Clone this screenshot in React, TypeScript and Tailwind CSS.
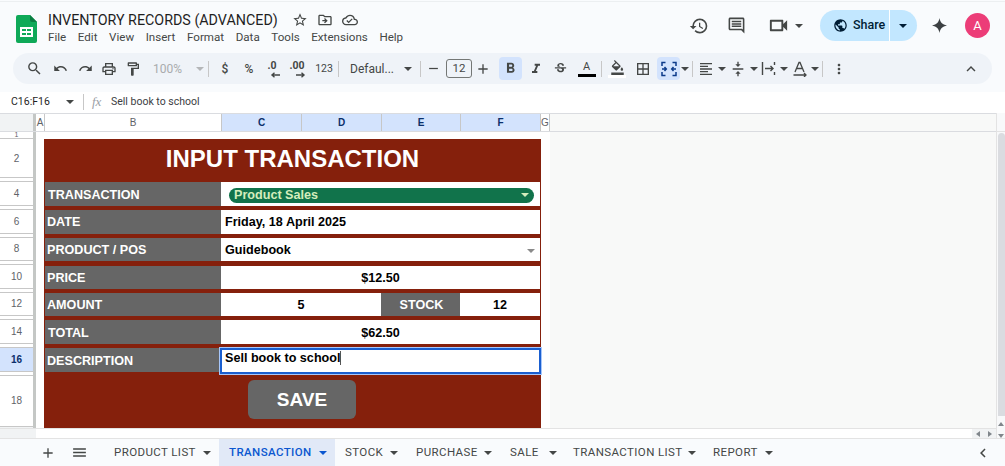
import React from "react";
import {
  MdSearch, MdUndo, MdRedo, MdOutlinePrint, MdOutlineFormatPaint, MdFormatBold, MdFormatItalic,
  MdStrikethroughS, MdOutlineFormatColorFill, MdBorderAll, MdFormatAlignLeft, MdVerticalAlignCenter,
  MdMoreVert, MdKeyboardArrowUp, MdHistory, MdOutlineComment, MdOutlineVideocam, MdPublic, MdAdd,
  MdMenu, MdChevronLeft, MdStarBorder, MdOutlineDriveFileMove, MdOutlineCloudDone, MdRemove,
} from "react-icons/md";

const ui = { fontFamily: "Roboto, 'Noto Sans', sans-serif" };
const sheet = { fontFamily: "'Liberation Sans', Arial, sans-serif" };

function Caret({ className = "border-t-[#444746]" }: { className?: string }) {
  return <span className={`inline-block h-0 w-0 border-x-[4px] border-t-[4px] border-x-transparent ${className}`} />;
}

function Sep({ className = "" }: { className?: string }) {
  return <span className={`h-[16px] w-px shrink-0 bg-[#c7c7c7] ${className}`} />;
}

function Slot({ className, children }: { className: string; children: React.ReactNode }) {
  return <span className={`flex h-[23px] shrink-0 items-center justify-center text-[#444746] ${className}`}>{children}</span>;
}

function SheetsLogo() {
  return (
    <svg width="21" height="28" viewBox="0 0 21 28" className="shrink-0">
      <path d="M2 0h12l7 7v19a2 2 0 0 1-2 2H2a2 2 0 0 1-2-2V2a2 2 0 0 1 2-2z" fill="#0fa958" />
      <path d="M14 0l7 7h-5a2 2 0 0 1-2-2z" fill="#0a7d41" />
      <path d="M4 12h13v10H4z" fill="#fff" />
      <path d="M6 14h4v2H6zM11 14h4v2h-4zM6 18h4v2H6zM11 18h4v2h-4z" fill="#0fa958" />
    </svg>
  );
}

function MergeIcon() {
  return (
    <svg width="16" height="16" viewBox="0 0 16 16" fill="none" stroke="#0b3a8a" strokeWidth="1.5">
      <path d="M1 5V1.500h3.500M11.500 1.500H15V5M1 11v3.500h3.500M11.500 14.500H15V11" />
      <path d="M1 8h3.500M3.500 6l1.800 2-1.800 2M15 8h-3.500M12.500 6l-1.800 2 1.800 2" />
    </svg>
  );
}

function WrapIcon() {
  return (
    <svg width="15" height="15" viewBox="0 0 15 15" fill="none" stroke="#444746" strokeWidth="1.4">
      <path d="M1.500 1v13M13.500 1v3M13.500 11v3M4 7.500h8M9.500 5l2.500 2.500L9.500 10" />
    </svg>
  );
}

function RotateIcon() {
  return (
    <svg width="16" height="16" viewBox="0 0 16 16" fill="none" stroke="#444746" strokeWidth="1.3">
      <path d="M3 11 7 1.500h1L12 11M4.600 7.500h5.800M1.500 14h12M12 12l2 2-2 2" />
    </svg>
  );
}

function DecreaseDecimal() {
  return (
    <span className="relative flex h-[18px] w-[18px] flex-col items-center text-[10.5px] font-bold leading-[11px] text-[#444746]">
      <span>.0</span>
      <svg width="12" height="6" viewBox="0 0 12 6" className="absolute right-[0px] bottom-[0px]" fill="none" stroke="#444746" strokeWidth="1.4">
        <path d="M11 3H3M5.500 .8 3 3l2.500 2.200" />
      </svg>
    </span>
  );
}

function IncreaseDecimal() {
  return (
    <span className="relative flex h-[18px] w-[22px] flex-col items-center text-[10.5px] font-bold leading-[11px] text-[#444746]">
      <span>.00</span>
      <svg width="12" height="6" viewBox="0 0 12 6" className="absolute right-[1px] bottom-[0px]" fill="none" stroke="#444746" strokeWidth="1.4">
        <path d="M1 3h8M6.500 .8 9 3 6.500 5.200" />
      </svg>
    </span>
  );
}

function Header() {
  const menus = ["File", "Edit", "View", "Insert", "Format", "Data", "Tools", "Extensions", "Help"];
  return (
    <div className="h-[92px] shrink-0 bg-[#f9fbfd] pt-[1px]" style={ui}>
      <div className="h-[1px] bg-[#eceff1]" />
      <div className="flex h-[51px] items-start">
        <div className="ml-[16px] mt-[13px]"><SheetsLogo /></div>
        <div className="ml-[11px] mt-[7px] flex flex-col">
          <div className="flex h-[21px] items-center">
            <span className="whitespace-nowrap text-[14.3px] leading-[20px] text-[#1f1f1f]">INVENTORY RECORDS (ADVANCED)</span>
            <span className="ml-[14px] flex items-center gap-[9px] text-[#444746]">
              <MdStarBorder size={16} />
              <MdOutlineDriveFileMove size={16} />
              <MdOutlineCloudDone size={16} />
            </span>
          </div>
          <div className="mt-[-1px] flex gap-[11.6px] text-[11.6px] leading-[17px] text-[#444746]">
            {menus.map((m) => <span key={m}>{m}</span>)}
          </div>
        </div>
        <div className="ml-auto mt-[8px] flex items-center pr-[15px] text-[#444746]">
          <MdHistory size={20} />
          <MdOutlineComment size={19} className="ml-[18px]" />
          <MdOutlineVideocam size={23} className="ml-[21px]" />
          <span className="ml-[5px] flex"><Caret /></span>
          <div className="ml-[17px] mr-[1px] flex h-[31px] w-[97px] items-center rounded-full bg-[#c2e7ff] text-[#001d35]">
            <div className="flex h-full w-[70px] items-center border-r border-white pl-[13px]">
              <MdPublic size={15} />
              <span className="ml-[5px] text-[12.5px] font-medium">Share</span>
            </div>
            <span className="ml-[9px] flex"><Caret className="border-t-[#001d35]" /></span>
          </div>
          <svg width="15" height="15" viewBox="0 0 16 16" className="ml-[14px]">
            <path d="M8 0c.7 4.600 2.900 7 8 8-5.100 1-7.300 3.400-8 8-.7-4.600-2.900-7-8-8 5.100-1 7.300-3.400 8-8z" fill="#3c4043" />
          </svg>
          <span className="ml-[18px] flex h-[25px] w-[25px] items-center justify-center rounded-full bg-[#ec3d78] text-[13px] text-white">A</span>
        </div>
      </div>
      <div className="mx-[13px] flex h-[31px] items-center rounded-full bg-[#eff3f8] pl-[9px]">
        <Slot className="w-[24px]"><MdSearch size={17} /></Slot>
        <Slot className="w-[28px] pl-[1px]"><MdUndo size={15} /></Slot>
        <Slot className="w-[22px]"><MdRedo size={15} /></Slot>
        <Slot className="w-[25px]"><MdOutlinePrint size={16} /></Slot>
        <Slot className="w-[24px]"><MdOutlineFormatPaint size={16} /></Slot>
        <Slot className="w-[63px] justify-start pl-[8px]">
          <span className="text-[12px] text-[#a9abad]">100%</span>
          <span className="ml-[14px] flex"><Caret className="border-t-[#b4b6b8]" /></span>
        </Slot>
        <Sep />
        <Slot className="ml-[4px] w-[24px] text-[12px] font-medium">$</Slot>
        <Slot className="w-[24px] text-[12px] font-medium">%</Slot>
        <Slot className="ml-[-1px] w-[24px]"><DecreaseDecimal /></Slot>
        <Slot className="ml-[1px] w-[24px]"><IncreaseDecimal /></Slot>
        <Slot className="ml-[3px] w-[24px] text-[10.5px]">123</Slot>
        <Sep className="ml-[2px]" />
        <Slot className="w-[77px] justify-start pl-[11px]">
          <span className="text-[12px]">Defaul...</span>
          <span className="ml-[10px] flex"><Caret /></span>
        </Slot>
        <Sep className="ml-[4px]" />
        <Slot className="w-[25px]"><MdRemove size={15} /></Slot>
        <span className="flex h-[19px] w-[26px] shrink-0 items-center justify-center rounded-[3px] border border-[#747775] text-[11.5px] text-[#444746]">12</span>
        <Slot className="ml-[-1px] w-[24px]"><MdAdd size={16} /></Slot>
        <Slot className="ml-[4px] w-[23px] rounded-[4px] bg-[#d3e3fd] text-[#0b2f6b]"><MdFormatBold size={17} /></Slot>
        <Slot className="ml-[1px] w-[25px]"><MdFormatItalic size={16} /></Slot>
        <Slot className="w-[24px]"><MdStrikethroughS size={15} /></Slot>
        <Slot className="ml-[1px] w-[27px] flex-col">
          <span className="text-[11px] leading-[12px]">A</span>
          <span className="mt-[1px] h-[3px] w-[18px] bg-black" />
        </Slot>
        <Sep className="ml-[1px]" />
        <Slot className="ml-[3px] w-[24px] flex-col">
          <MdOutlineFormatColorFill size={15} />
          <span className="h-[3px] w-[18px] bg-white" />
        </Slot>
        <Slot className="ml-[1px] w-[26px]"><MdBorderAll size={16} /></Slot>
        <Slot className="ml-[1px] w-[23px] rounded-[4px] bg-[#d3e3fd]"><MergeIcon /></Slot>
        <Slot className="w-[10px]"><Caret /></Slot>
        <Sep className="ml-[2px]" />
        <Slot className="ml-[4px] w-[17px]"><MdFormatAlignLeft size={16} /></Slot>
        <Slot className="ml-[2px] w-[12px]"><Caret /></Slot>
        <Slot className="ml-[1px] w-[17px]"><MdVerticalAlignCenter size={16} /></Slot>
        <Slot className="ml-[2px] w-[12px]"><Caret /></Slot>
        <Slot className="ml-[-1px] w-[18px]"><WrapIcon /></Slot>
        <Slot className="ml-[1px] w-[12px]"><Caret /></Slot>
        <Slot className="ml-[1px] w-[18px]"><RotateIcon /></Slot>
        <Slot className="w-[12px]"><Caret /></Slot>
        <Sep className="ml-[1px]" />
        <Slot className="ml-[4px] w-[24px]"><MdMoreVert size={16} /></Slot>
        <Slot className="ml-auto mr-[9px] w-[24px]"><MdKeyboardArrowUp size={18} /></Slot>
      </div>
    </div>
  );
}

function FormulaBar() {
  return (
    <div className="flex h-[21px] shrink-0 items-center bg-white pb-[2px] text-[10.5px] text-[#1f1f1f]" style={ui}>
      <span className="ml-[11px] w-[55px]">C16:F16</span>
      <span className="flex"><Caret /></span>
      <Sep className="ml-[9px] h-[14px]" />
      <span className="ml-[8px] w-[19px] text-[13px] italic text-[#9aa0a6]" style={{ fontFamily: "'Liberation Serif', serif" }}>fx</span>
      <span className="text-[10.5px] text-[#3c4043]">Sell book to school</span>
    </div>
  );
}

function ColHead({ label, className }: { label: string; className: string }) {
  return (
    <div className={`flex h-full shrink-0 items-center justify-center border-r border-[#c7c7c7] text-[10px] ${className}`}>
      {label}
    </div>
  );
}

function ColumnHeaders() {
  const sel = "w-[80px] bg-[#d3e3fd] font-bold text-[#0b2f6b]";
  return (
    <div className="flex h-[19px] shrink-0 border-y border-[#dadce0] bg-white text-[#5f6368]" style={sheet}>
      <div className="h-full w-[36px] shrink-0 border-r-[3px] border-[#c4c7c5] bg-[#f1f3f4]" />
      <ColHead label="A" className="w-[9px]" />
      <ColHead label="B" className="w-[177px]" />
      <ColHead label="C" className={sel} />
      <ColHead label="D" className={sel} />
      <ColHead label="E" className="w-[79px] bg-[#d3e3fd] font-bold text-[#0b2f6b]" />
      <ColHead label="F" className={sel} />
      <ColHead label="G" className="w-[9px]" />
      <div className="flex-1 bg-[#f8f9f8]" />
    </div>
  );
}

function RowNumbers() {
  const rows: [string, string, boolean?][] = [
    ["1", "h-[7px]"], ["2", "h-[39px]"], ["", "h-[4px]"], ["4", "h-[24px]"], ["", "h-[4px]"], ["6", "h-[23.5px]"],
    ["", "h-[4px]"], ["8", "h-[23.5px]"], ["", "h-[4px]"], ["10", "h-[23.5px]"], ["", "h-[4px]"], ["12", "h-[23.5px]"],
    ["", "h-[4px]"], ["14", "h-[23.5px]"], ["", "h-[4px]"], ["16", "h-[24px]", true], ["", "h-[4px]"], ["18", "h-[51px]"],
  ];
  return (
    <div className="flex w-[36px] shrink-0 flex-col border-r-[3px] border-[#c4c7c5] bg-white text-[10px] text-[#5f6368]" style={sheet}>
      {rows.map(([label, h, active], i) => (
        <div
          key={i}
          className={`flex shrink-0 items-center justify-center overflow-hidden border-b border-[#c7c7c7] ${h} ${active ? "bg-[#d3e3fd] font-bold text-[#0b2f6b]" : ""} ${label === "1" ? "text-[7px]" : ""}`}
        >
          {label}
        </div>
      ))}
      <div className="flex-1 bg-[#f1f3f4]" />
    </div>
  );
}

function Label({ children, className = "" }: { children: React.ReactNode; className?: string }) {
  return <div className={`flex items-center bg-[#666666] pl-[2px] pt-[2px] text-[12.6px] font-bold text-white ${className}`}>{children}</div>;
}

function Value({ children, className = "" }: { children: React.ReactNode; className?: string }) {
  return <div className={`flex items-center bg-white pt-[2px] text-[12.6px] font-bold text-black ${className}`}>{children}</div>;
}

function Form() {
  return (
    <div className="w-[497px] bg-[#85200c] pl-[1px] pr-[1px]" style={sheet}>
      <div className="flex h-[43px] items-center justify-center pb-[3px] text-[24px] font-bold text-white">INPUT TRANSACTION</div>
      <div className="grid grid-cols-[176px_80px_80px_79px_80px] grid-rows-[24px_23.5px_23.5px_23px_23.5px_23.5px_24px] gap-y-[4.2px]">
        <Label className="pl-[3px]">TRANSACTION</Label>
        <Value className="col-span-4 pl-[8px] pr-[6px] pt-[0px]">
          <div className="flex h-[15px] w-full items-center justify-between rounded-full bg-[#11734b] pl-[5px] pr-[5px] text-[#d4edbc]">
            <span>Product Sales</span>
            <Caret className="border-t-[#d4edbc]" />
          </div>
        </Value>
        <Label>DATE</Label>
        <Value className="col-span-4 pl-[4px]">Friday, 18 April 2025</Value>
        <Label>PRODUCT / POS</Label>
        <Value className="col-span-4 justify-between pl-[4px] pr-[5px]">
          <span>Guidebook</span>
          <Caret className="border-t-[#8a8a8a]" />
        </Value>
        <Label>PRICE</Label>
        <Value className="col-span-4 justify-center">$12.50</Value>
        <Label>AMOUNT</Label>
        <Value className="col-span-2 justify-center">5</Value>
        <Label className="justify-center pl-[0px]">STOCK</Label>
        <Value className="justify-center">12</Value>
        <Label className="pl-[3px]">TOTAL</Label>
        <Value className="col-span-4 justify-center">$62.50</Value>
        <Label>DESCRIPTION</Label>
        <div className="col-span-4 ml-[-1px] mr-[-1px] h-[26px] border-2 border-[#1a5fd0] bg-white pl-[3px] text-[12.6px] font-bold leading-[17px] text-black outline outline-1 outline-[#a8c7fa]">
          <span className="border-r border-[#555]">Sell book to school</span>
        </div>
      </div>
      <div className="flex h-[55.5px] items-start pl-[203px] pt-[8px]">
        <div className="flex h-[39px] w-[108px] items-center justify-center rounded-[6px] bg-[#666666] pt-[1px] text-[19px] font-bold text-white">SAVE</div>
      </div>
    </div>
  );
}

function VScroll() {
  return (
    <div className="flex h-full w-[9px] shrink-0 flex-col items-center border-l border-[#e3e3e3] bg-[#f8f9fa]">
      <div className="h-[19px] w-full shrink-0 border-b border-[#e3e3e3]" />
      <div className="mt-[1px] h-[283px] w-[7px] rounded-t-full bg-[#dadce0]" />
      <div className="mt-[6px] h-0 w-0 border-x-[3px] border-b-[4px] border-x-transparent border-b-[#80868b]" />
      <div className="mt-[8px] h-0 w-0 border-x-[3px] border-t-[4px] border-x-transparent border-t-[#80868b]" />
    </div>
  );
}

function Sheet() {
  return (
    <div className="flex min-h-0 flex-1 bg-white">
      <div className="flex min-w-0 flex-1 flex-col">
        <ColumnHeaders />
        <div className="flex min-h-0 flex-1">
          <RowNumbers />
          <div className="w-[514px] shrink-0 bg-white pl-[8px] pt-[7px]"><Form /></div>
          <div className="flex-1 bg-[#f8f9f8]" />
        </div>
        <div className="flex h-[10px] shrink-0 border-t border-[#e3e3e3] bg-white">
          <div className="w-[36px] bg-[#f1f3f4]" />
          <div className="flex-1" />
          <div className="flex w-[24px] items-center justify-around bg-[#f1f3f4]">
            <span className="h-0 w-0 border-y-[3px] border-r-[4px] border-y-transparent border-r-[#80868b]" />
            <span className="h-0 w-0 border-y-[3px] border-l-[4px] border-y-transparent border-l-[#80868b]" />
          </div>
        </div>
      </div>
      <VScroll />
    </div>
  );
}

function Tab({ label, className, active }: { label: string; className: string; active?: boolean }) {
  return (
    <div className={`flex h-full shrink-0 items-center justify-between pt-[1px] ${active ? "bg-[#e1e9f7] font-medium text-[#0b57d0]" : "text-[#444746]"} ${className}`}>
      <span className="whitespace-nowrap tracking-[0.4px]">{label}</span>
      <Caret className={active ? "border-t-[#0b57d0]" : "border-t-[#444746]"} />
    </div>
  );
}

function Tabs() {
  return (
    <div className="flex h-[28px] shrink-0 items-center border-t border-[#e3e3e3] bg-[#f9fbfd] text-[11.5px]" style={ui}>
      <MdAdd size={16} className="ml-[40px] text-[#444746]" />
      <MdMenu size={17} className="ml-[15px] text-[#444746]" />
      <Tab label="PRODUCT LIST" className="ml-[26px] w-[97px]" />
      <Tab label="TRANSACTION" active className="ml-[8px] w-[116px] pl-[10px] pr-[8px]" />
      <Tab label="STOCK" className="ml-[10px] w-[53px]" />
      <Tab label="PURCHASE" className="ml-[18px] w-[76px]" />
      <Tab label="SALE" className="ml-[18px] w-[47px]" />
      <Tab label="TRANSACTION LIST" className="ml-[16px] w-[123px]" />
      <Tab label="REPORT" className="ml-[17px] w-[60px]" />
      <MdChevronLeft size={18} className="ml-auto mr-[13px] text-[#444746]" />
    </div>
  );
}

export default function App() {
  return (
    <div className="flex h-[466px] w-[1005px] flex-col overflow-hidden bg-white">
      <Header />
      <FormulaBar />
      <Sheet />
      <Tabs />
    </div>
  );
}
